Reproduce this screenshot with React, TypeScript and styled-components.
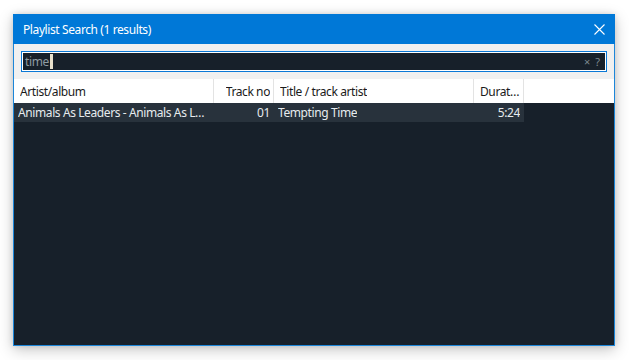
import React from "react";
import styled, { createGlobalStyle } from "styled-components";

const GlobalStyle = createGlobalStyle`
  html, body {
    margin: 0;
    padding: 0;
    background: #ffffff;
  }
  body {
    font-family: "Noto Sans", "Open Sans", sans-serif;
    letter-spacing: -0.4px;
  }
`;

interface Column {
  id: string;
  label: string;
  width: number;
  align: "left" | "right";
}

const columns: Column[] = [
  { id: "artist", label: "Artist/album", width: 200, align: "left" },
  { id: "track", label: "Track no", width: 60, align: "right" },
  { id: "title", label: "Title / track artist", width: 200, align: "left" },
  { id: "duration", label: "Duration", width: 50, align: "left" },
];

const rows = [
  {
    artist: "Animals As Leaders - Animals As Leaders",
    track: "01",
    title: "Tempting Time",
    duration: "5:24",
  },
];

const Page = styled.div`
  padding: 14px 0 0 13px;
  width: 629px;
  height: 360px;
  box-sizing: border-box;
`;

const Window = styled.div`
  width: 602px;
  height: 332px;
  box-sizing: border-box;
  display: flex;
  flex-direction: column;
  background: #17202a;
  border: 1px solid #1c86d9;
  border-top: none;
  box-shadow: 0 4px 14px rgba(0, 0, 0, 0.22), 0 0 6px rgba(0, 0, 0, 0.12);
`;

const TitleBar = styled.div`
  height: 30px;
  margin: 0 -1px;
  padding: 0 0 0 10px;
  background: #0078d7;
  display: flex;
  align-items: center;
  justify-content: space-between;
  color: #ffffff;
  font-size: 12px;
`;

const CloseButton = styled.div`
  width: 30px;
  height: 30px;
  margin-right: 1px;
  display: flex;
  align-items: center;
  justify-content: center;
`;

const SearchArea = styled.div`
  background: #f0f0f0;
  padding: 7px 7px;
`;

const SearchBox = styled.div`
  height: 21px;
  box-sizing: border-box;
  border: 1px solid #0a78d6;
  box-shadow: inset 0 0 0 1px #ffffff;
  background: #17202a;
  display: flex;
  align-items: center;
  padding: 0 6px 0 3px;
  font-size: 12px;
`;

const SearchText = styled.span`
  color: #8f9ca3;
`;

const Caret = styled.span`
  display: inline-block;
  width: 3px;
  height: 15px;
  background: #e8e0cc;
  margin-left: 1px;
`;

const SearchHint = styled.span`
  margin-left: auto;
  color: #7d8a90;
  font-size: 11px;
  letter-spacing: 0;
  word-spacing: 2px;
`;

const Header = styled.div`
  height: 24px;
  background: #ffffff;
  display: flex;
`;

const HeaderCell = styled.div<{ $width: number; $align: string }>`
  width: ${({ $width }) => $width}px;
  flex: none;
  box-sizing: border-box;
  border-right: 1px solid #e3e3e3;
  padding: 0 3px 0 6px;
  display: flex;
  align-items: center;
  justify-content: ${({ $align }) => ($align === "right" ? "flex-end" : "flex-start")};
  color: #1a1a1a;
  font-size: 12px;
  white-space: nowrap;
  overflow: hidden;
`;

const Ellipsis = styled.span`
  overflow: hidden;
  text-overflow: ellipsis;
  white-space: nowrap;
`;

const List = styled.div`
  flex: 1;
  background: #17202a;
`;

const Row = styled.div`
  height: 19px;
  display: flex;
  width: 510px;
  background: #28323c;
`;

const Cell = styled.div<{ $width: number; $align: string }>`
  width: ${({ $width }) => $width}px;
  flex: none;
  box-sizing: border-box;
  padding: 0 4px;
  display: flex;
  align-items: center;
  justify-content: ${({ $align }) => ($align === "right" ? "flex-end" : "flex-start")};
  color: #e6ebee;
  font-size: 12px;
  white-space: nowrap;
  overflow: hidden;
`;

export default function App() {
  return (
    <Page>
      <GlobalStyle />
      <Window>
        <TitleBar>
          <span>Playlist Search (1 results)</span>
          <CloseButton>
            <svg width="11" height="11" viewBox="0 0 11 11">
              <path d="M0.5 0.5 L10.5 10.5 M10.5 0.5 L0.5 10.5" stroke="#ffffff" strokeWidth="1.1" />
            </svg>
          </CloseButton>
        </TitleBar>
        <SearchArea>
          <SearchBox>
            <SearchText>time</SearchText>
            <Caret />
            <SearchHint>× ?</SearchHint>
          </SearchBox>
        </SearchArea>
        <Header>
          {columns.map((c) => (
            <HeaderCell key={c.id} $width={c.width} $align={c.align}>
              <Ellipsis>{c.label}</Ellipsis>
            </HeaderCell>
          ))}
        </Header>
        <List>
          {rows.map((r, i) => (
            <Row key={i}>
              {columns.map((c) => (
                <Cell key={c.id} $width={c.width} $align={c.id === "duration" ? "right" : c.align}>
                  <Ellipsis>{r[c.id as keyof typeof r]}</Ellipsis>
                </Cell>
              ))}
            </Row>
          ))}
        </List>
      </Window>
    </Page>
  );
}
